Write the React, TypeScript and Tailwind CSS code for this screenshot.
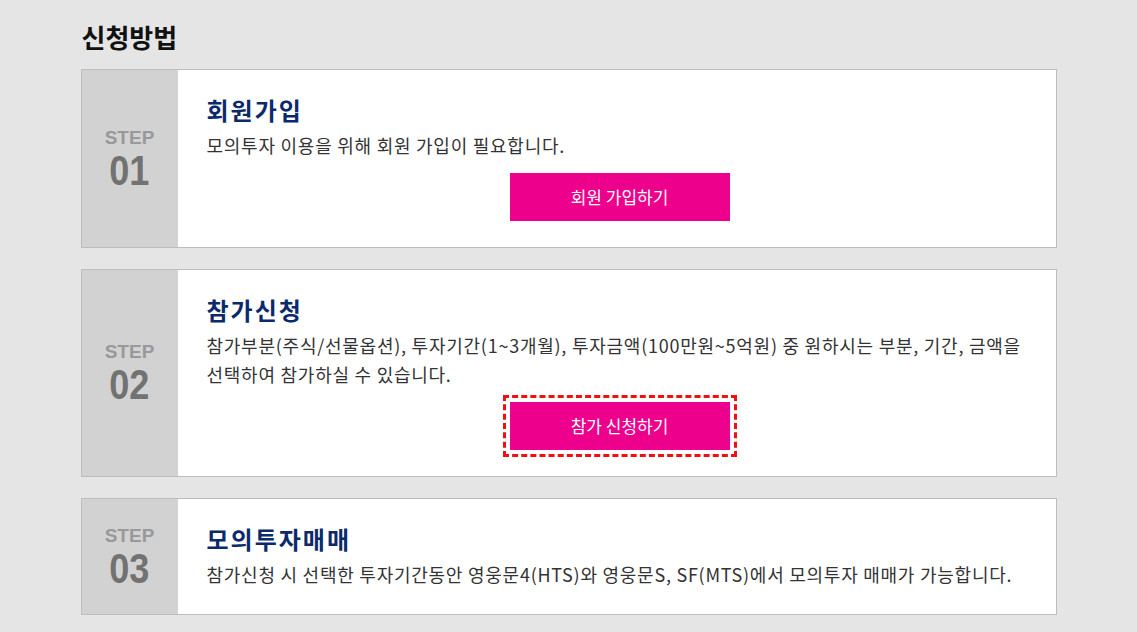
import React from 'react';

interface StepProps {
  num: string;
  title: string;
  desc: React.ReactNode;
  button?: string;
  focused?: boolean;
}

const kr = { fontFamily: '"Noto Sans CJK KR", "Noto Sans", sans-serif' };

function StepCard({ num, title, desc, button, focused }: StepProps) {
  return (
    <div className="flex border border-[#bdbdbd] bg-white">
      <div
        className="flex w-[96px] shrink-0 flex-col items-center justify-center bg-[#d2d2d2]"
        style={{ fontFamily: '"Liberation Sans", Arial, sans-serif' }}
      >
        <span className="mt-[2px] text-[19px] font-bold leading-[22px] text-[#999999]">STEP</span>
        <span className="inline-block scale-x-[0.86] text-[42px] font-bold leading-[44px] text-[#727272]">
          {num}
        </span>
      </div>
      <div className="flex flex-1 flex-col pt-[25px] pb-[25px] pl-[29px] pr-[23px]" style={kr}>
        <h3 className="text-[24px] font-bold leading-[30px] tracking-[2px] text-[#0b2a6c]">{title}</h3>
        <p className="mt-[6px] text-[18px] leading-[29px] tracking-[0.75px] text-[#333333]">{desc}</p>
        {button && (
          <button
            className={
              'mt-[13px] mb-[1px] h-[48px] w-[220px] self-center bg-[#ec008c] text-[17px] text-white ' +
              (focused ? 'outline-[3px] outline-dashed outline-[#f01010] outline-offset-[4px]' : '')
            }
          >
            {button}
          </button>
        )}
      </div>
    </div>
  );
}

export default function App() {
  return (
    <div className="min-h-[632px] w-full bg-[#e5e5e5]">
      <div className="mx-auto w-[976px] pt-[19px]">
        <h2 className="pl-[1px] text-[26px] font-bold leading-[36px] text-[#111111]" style={kr}>
          신청방법
        </h2>
        <div className="mt-[14px] flex flex-col gap-[21px]">
          <StepCard
            num="01"
            title="회원가입"
            desc="모의투자 이용을 위해 회원 가입이 필요합니다."
            button="회원 가입하기"
          />
          <StepCard
            num="02"
            title="참가신청"
            desc="참가부분(주식/선물옵션), 투자기간(1~3개월), 투자금액(100만원~5억원) 중 원하시는 부분, 기간, 금액을 선택하여 참가하실 수 있습니다."
            button="참가 신청하기"
            focused
          />
          <StepCard
            num="03"
            title="모의투자매매"
            desc="참가신청 시 선택한 투자기간동안 영웅문4(HTS)와 영웅문S, SF(MTS)에서 모의투자 매매가 가능합니다."
          />
        </div>
      </div>
    </div>
  );
}
